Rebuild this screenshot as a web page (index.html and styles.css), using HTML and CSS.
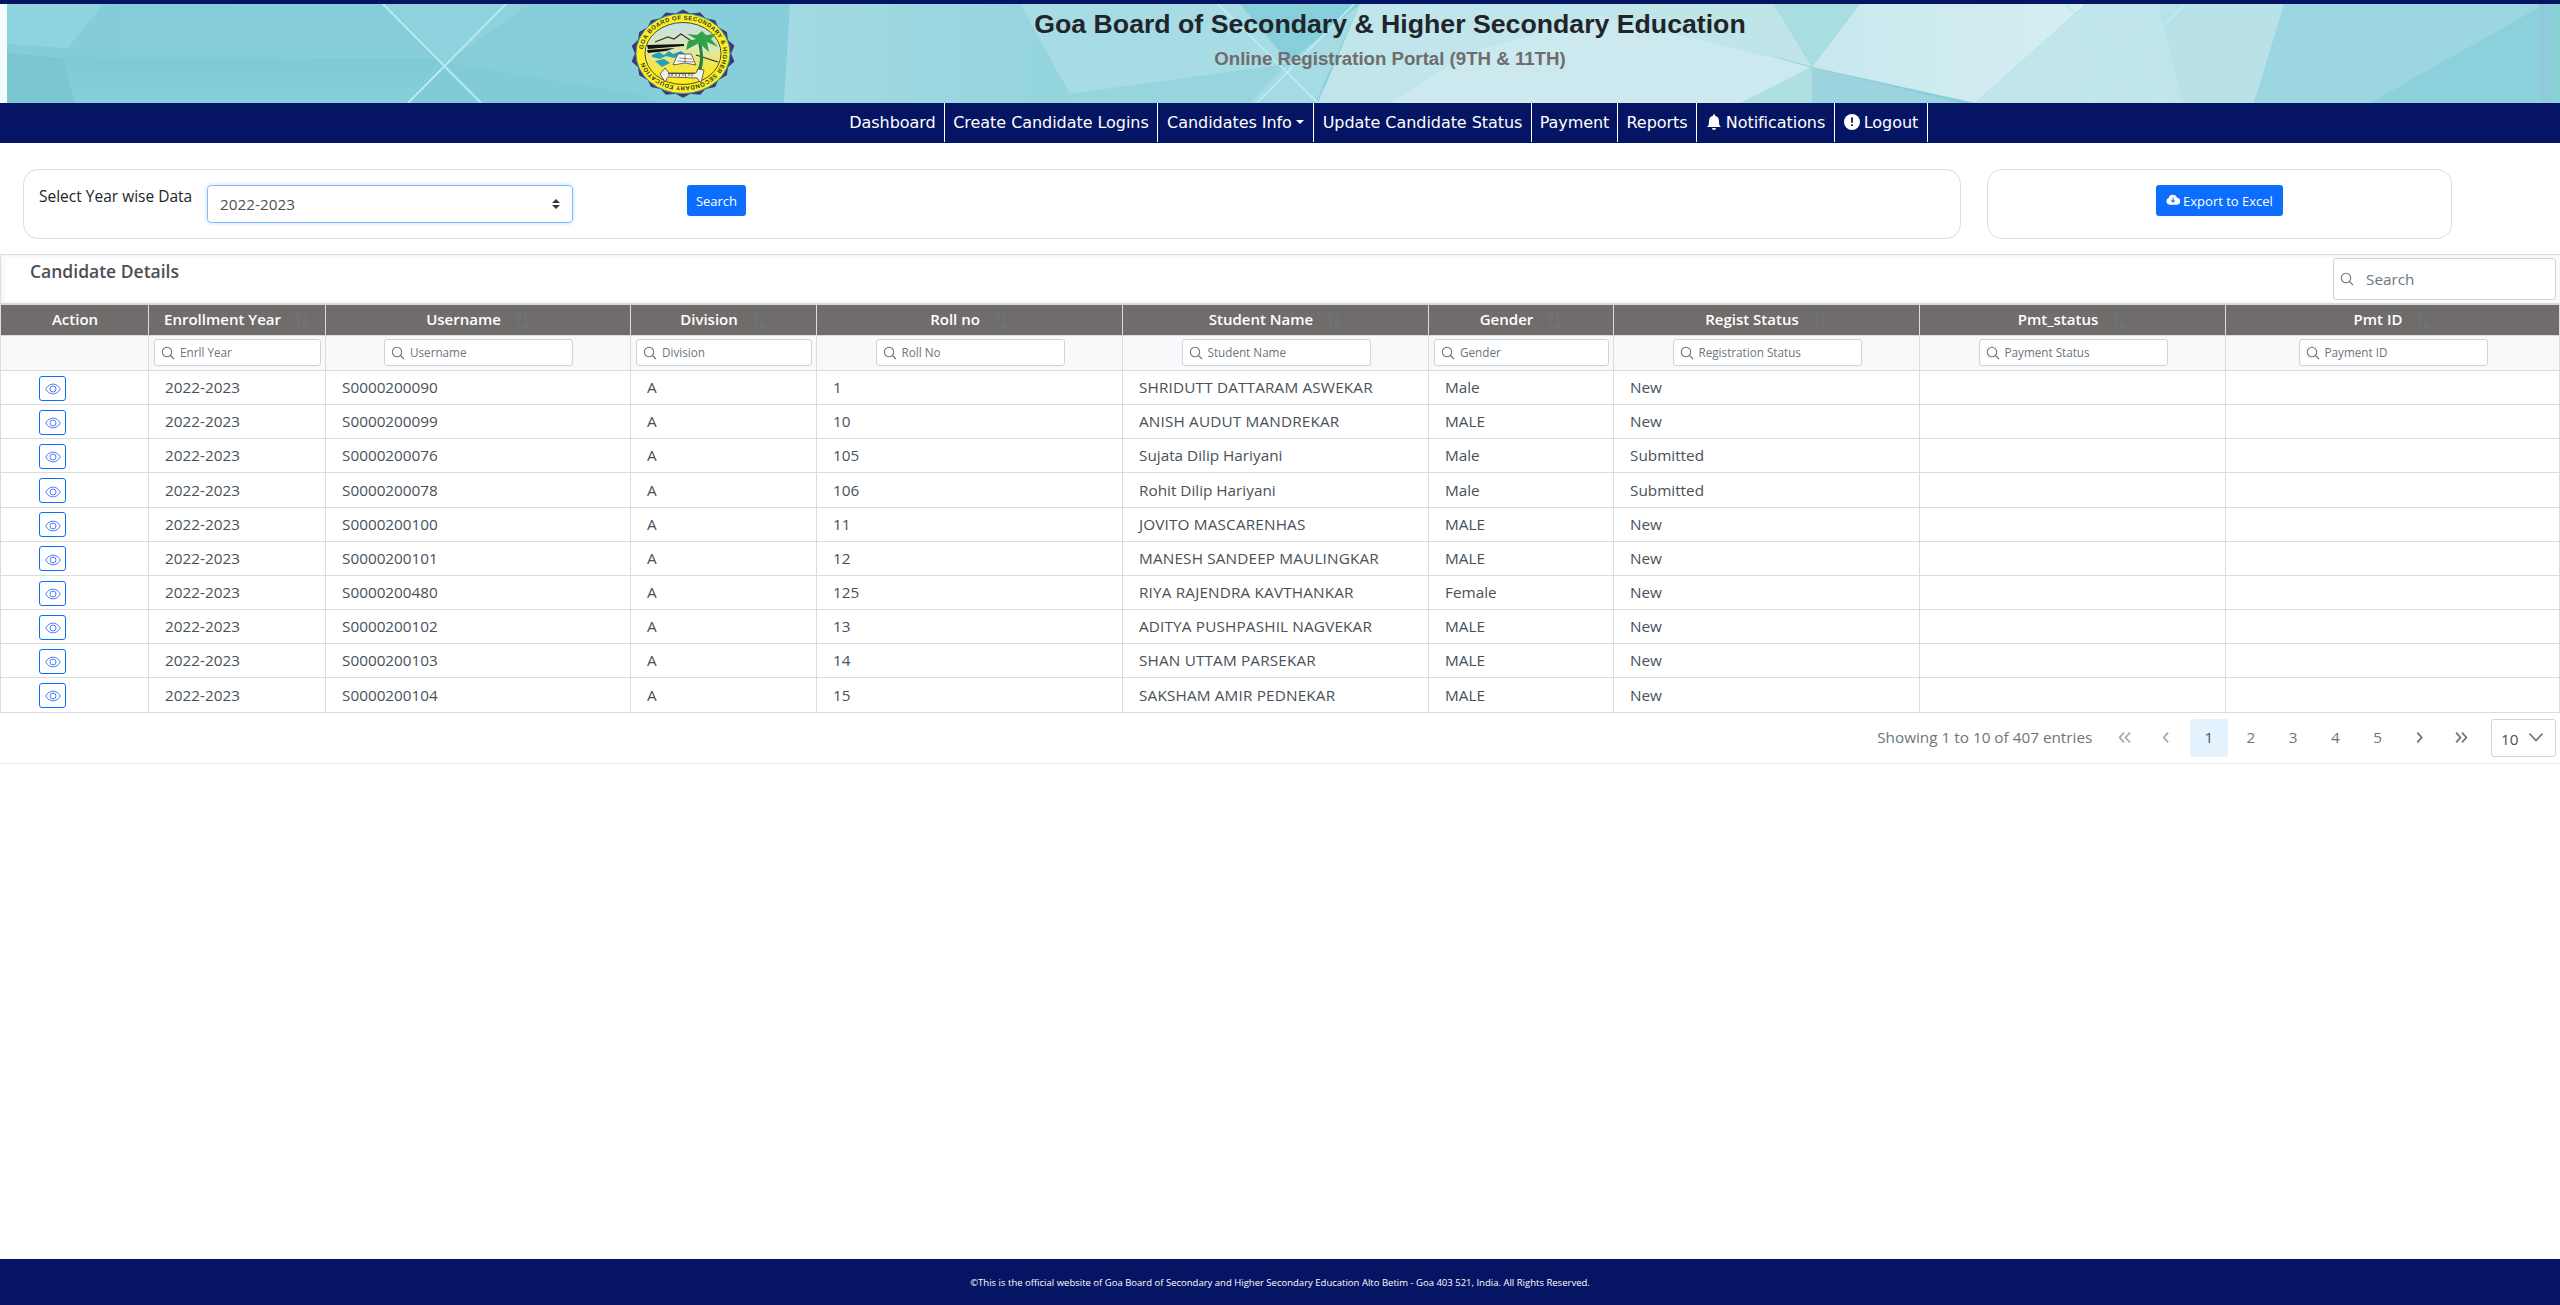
FILE: index.html
```html
<!DOCTYPE html>
<html lang="en">
<head>
<meta charset="utf-8">
<title>Goa Board - Candidate Details</title>
<link rel="stylesheet" href="styles.css">
</head>
<body>
<svg class="defs" aria-hidden="true">
  <symbol id="eye" viewBox="0 0 16 12"><path d="M.7 6C2.600 2.700 5.200 1.100 8 1.100S13.400 2.700 15.300 6C13.400 9.300 10.800 10.900 8 10.900S2.600 9.300.7 6z"/><circle cx="8" cy="6" r="3"/></symbol>
  <symbol id="lens" viewBox="0 0 14 14"><circle cx="6" cy="6" r="4.700"/><path d="M9.500 9.500 13 13"/></symbol>
  <symbol id="sort" viewBox="0 0 16 18"><path d="M4.500 17V1.500M1.500 4.500l3-3 3 3M11.500 1v15.500M8.500 13.500l3 3 3-3"/></symbol>
</svg>
<header class="banner">
  <svg class="art" viewBox="0 4 2560 99" preserveAspectRatio="none">
    <defs>
      <linearGradient id="sky" x1="0" x2="1" y1="0" y2="0"><stop offset="0" stop-color="#84cdd8"/><stop offset=".3" stop-color="#86cfda"/><stop offset="1" stop-color="#88cfd9"/></linearGradient>
      <linearGradient id="mid" x1="0" x2="1" y1="0" y2="0"><stop offset="0" stop-color="#a3dae3"/><stop offset="1" stop-color="#93d4dd"/></linearGradient>
      <linearGradient id="pale" x1="0" x2="1" y1="0" y2="0"><stop offset="0" stop-color="#c8e8ed"/><stop offset="1" stop-color="#d5eef2"/></linearGradient>
      <linearGradient id="low" x1="0" x2="0" y1="0" y2="1"><stop offset="0" stop-color="#7fcad7"/><stop offset="1" stop-color="#86cfda"/></linearGradient>
    </defs>
    <rect x="0" y="4" width="2560" height="99" fill="url(#sky)"/>
    <path d="M7 4h96L68 48 7 44z" fill="#8fd3df"/>
    <path d="M7 53l56 5 12 45H7z" fill="#7ac7d3"/>
    <path d="M63 58L440 58 410 103H75z" fill="url(#low)"/>
    <path d="M440 62l200 32 20 9H410z" fill="#80cbd7"/>
    <path d="M380 4h150L444 64z" fill="#8fd2dd"/>
    <path d="M790 4h262l20 99H784z" fill="url(#mid)"/>
    <path d="M1020 4h220l50 60-220 30z" fill="#a8dce5"/>
    <path d="M1070 94l217-30 60 39H1068z" fill="#97d5de"/>
    <path d="M1287 64l73-60-45 99h-65z" fill="#a6dbe3"/>
    <path d="M1360 4h240l212 64-70 35h-424z" fill="#c0e5eb"/>
    <path d="M1390 103l80-50 130-37 210 51-70 36z" fill="#cbe9ee"/>
    <path d="M1590 4h184l38 63z" fill="#bfe5e9"/>
    <path d="M1774 4h86l-48 63z" fill="#a8dde1"/>
    <path d="M1860 4h226L1975 103l-163-36z" fill="url(#pale)"/>
    <path d="M1812 67l-70 36h70z" fill="#aedfe1"/>
    <path d="M1812 67l148 36h-148z" fill="#9bd4df"/>
    <path d="M2086 4h200l-32 99H1975z" fill="#c0e5eb"/>
    <path d="M2158 4h126l-30 99h-72z" fill="#b8e1e8"/>
    <path d="M2284 4h276L2370 103H2254z" fill="#9bd6e1"/>
    <path d="M2545 4h15v99h-190z" fill="#8bd0db"/>
    <path d="M2539 4h11v99h-9z" fill="#90c9dc"/><path d="M2550 4h10v99h-10z" fill="#88d1d7"/>
    <path d="M383 4l98 99M506 4l-98 99M1218 4l100 99M1354 4l-97 99M2066 4l97 99M2185 4l-98 99" fill="none" stroke="#b9ebf3" stroke-width="1.800"/>
    <rect x="0" y="4" width="7" height="99" fill="#f4fbfc"/>
  </svg>
  <svg class="seal" viewBox="0 0 104 90">
    <defs>
      <linearGradient id="field" x1="0" x2="0" y1="0" y2="1"><stop offset="0" stop-color="#c5e0e8"/><stop offset=".42" stop-color="#dce7b4"/><stop offset=".72" stop-color="#f5e642"/><stop offset="1" stop-color="#ffec16"/></linearGradient>
      <path id="ring" d="M12 42.500A40 32.800 0 0 1 92 44.500A40 32.800 0 0 1 12 44.500"/>
    </defs>
    <path transform="translate(-3.600 .5) scale(1.070 .98)" d="M52 0l7 4 9-1 5 6 9 2 3 7 8 5 1 8 6 6-3 8 3 8-6 6-1 8-8 5-3 7-9 2-5 6-9-1-7 4-7-4-9 1-5-6-9-2-3-7-8-5-1-8-6-6 3-8-3-8 6-6 1-8 8-5 3-7 9-2 5-6 9 1z" fill="#46366f"/>
    <ellipse cx="52" cy="44.500" rx="47" ry="40" fill="#ffee23" stroke="#2e9caa"/>
    <ellipse cx="52" cy="44.500" rx="38" ry="31" fill="url(#field)" stroke="#39402c" stroke-width=".9"/>
    <path d="M24 33l13-5 6 2 7-5 9 6 6 3" fill="none" stroke="#333" stroke-width="1.300"/>
    <path d="M16 36l37-1v2l-36 3zM16 41l28-2-9 3-18 2z" fill="#111"/>
    <path d="M21 46l7-3 5 3 5-4 4 3 8-3 4 3-11 4-8-2-6 3-8-2zM24 52l9-2 6 4-8 4z" fill="#259ec0"/>
    <path d="M42 56l5-11h13l5 11-11-2z" fill="#fff" stroke="#444" stroke-width=".8"/><path d="M54 46v8M48 49l13 1M46 52l17 1" stroke="#555" stroke-width=".7"/>
    <path d="M65 46l22 7" stroke="#333" stroke-width="1.300"/>
    <path d="M65 63c5-8 5-16 2-30l3-1c2 12 4 22-1 32z" fill="#228545"/>
    <path d="M68 34l-13 7 2-9 8-2-9-5 10 1 5-4 4 4 10-1-5 5 7 8-11-5 2 10z" fill="#31a34b"/>
    <path d="M34 59l-5 6 5 8 3-5 29 1 4 5 3-13-6-1-2 4H38z" fill="#f4f2e8" stroke="#444" stroke-width=".8"/>
    <path d="M37 64.500h27M38 67v-2.500M41 67v-2l2-1M45 67v-3M48 67.500l1-3M52 67v-2.500M55 68l-1-3M58 67v-3M61 67.500v-3" fill="none" stroke="#333" stroke-width=".8"/>
    <text class="seal-text"><textPath href="#ring" startOffset="2" textLength="218" lengthAdjust="spacing">GOA BOARD OF SECONDARY &amp; HIGHER SECONDARY EDUCATION</textPath></text>
  </svg>
  <div class="titles"><h1>Goa Board of Secondary &amp; Higher Secondary Education</h1><h2>Online Registration Portal (9TH &amp; 11TH)</h2></div>
</header>
<nav class="nav">
  <a class="n1">Dashboard</a><a class="n2">Create Candidate Logins</a><a class="n3">Candidates Info<i class="caret"></i></a><a class="n4">Update Candidate Status</a><a class="n5">Payment</a><a class="n6">Reports</a>
  <a class="n7"><svg viewBox="0 0 16 16"><path d="M8 16a2 2 0 0 0 2-2H6a2 2 0 0 0 2 2zM8 0l1 1v.8C11.500 2.300 13 4.200 13 7c0 4 .7 5 2 6H1c1.300-1 2-2 2-6 0-2.800 1.500-4.700 4-5.200V1z" fill="#fff"/></svg>Notifications</a>
  <a class="n8"><svg viewBox="0 0 16 16"><circle cx="8" cy="8" r="8" fill="#fff"/><path d="M7 3.500h2L8.700 9H7.300zM7.100 10.300h1.800v1.800H7.100z" fill="#061563"/></svg>Logout</a>
</nav>
<section class="controls">
  <div class="panel year"><label>Select Year wise Data</label><div class="select">2022-2023<svg viewBox="0 0 8 10"><path d="M4 0l4 4H0zM4 10L0 6h8z" fill="#343a40"/></svg></div><button class="btn">Search</button></div>
  <div class="panel export"><button class="btn"><svg viewBox="0 0 16 12"><path d="M4 12a4 4 0 0 1-1-7.700A5 5 0 0 1 12.500 4 4 4 0 0 1 12 12z" fill="#fff"/><path d="M8 4v5M6 7l2 2 2-2" fill="none" stroke="#0d6efd" stroke-width="1.200"/></svg>Export to Excel</button></div>
</section>
<main class="table">
  <div class="caption"><div class="caption-in"><h3>Candidate Details</h3><div class="global"><svg><use href="#lens"/></svg>Search</div></div></div>
  <div class="row head"><div>Action</div><div>Enrollment Year<svg><use href="#sort"/></svg></div><div>Username<svg><use href="#sort"/></svg></div><div>Division<svg><use href="#sort"/></svg></div><div>Roll no<svg><use href="#sort"/></svg></div><div>Student Name<svg><use href="#sort"/></svg></div><div>Gender<svg><use href="#sort"/></svg></div><div>Regist Status<svg><use href="#sort"/></svg></div><div>Pmt_status<svg><use href="#sort"/></svg></div><div>Pmt ID<svg><use href="#sort"/></svg></div></div>
  <div class="row filter"><div></div><div><span><svg><use href="#lens"/></svg>Enrll Year</span></div><div><span><svg><use href="#lens"/></svg>Username</span></div><div><span><svg><use href="#lens"/></svg>Division</span></div><div><span><svg><use href="#lens"/></svg>Roll No</span></div><div><span><svg><use href="#lens"/></svg>Student Name</span></div><div><span><svg><use href="#lens"/></svg>Gender</span></div><div><span><svg><use href="#lens"/></svg>Registration Status</span></div><div><span><svg><use href="#lens"/></svg>Payment Status</span></div><div><span><svg><use href="#lens"/></svg>Payment ID</span></div></div>
  <div class="row data"><div><b><svg><use href="#eye"/></svg></b></div><div>2022-2023</div><div>S0000200090</div><div>A</div><div>1</div><div class="caps">SHRIDUTT DATTARAM ASWEKAR</div><div>Male</div><div>New</div><div></div><div></div></div>
  <div class="row data"><div><b><svg><use href="#eye"/></svg></b></div><div>2022-2023</div><div>S0000200099</div><div>A</div><div>10</div><div class="caps">ANISH AUDUT MANDREKAR</div><div>MALE</div><div>New</div><div></div><div></div></div>
  <div class="row data"><div><b><svg><use href="#eye"/></svg></b></div><div>2022-2023</div><div>S0000200076</div><div>A</div><div>105</div><div>Sujata Dilip Hariyani</div><div>Male</div><div>Submitted</div><div></div><div></div></div>
  <div class="row data"><div><b><svg><use href="#eye"/></svg></b></div><div>2022-2023</div><div>S0000200078</div><div>A</div><div>106</div><div>Rohit Dilip Hariyani</div><div>Male</div><div>Submitted</div><div></div><div></div></div>
  <div class="row data"><div><b><svg><use href="#eye"/></svg></b></div><div>2022-2023</div><div>S0000200100</div><div>A</div><div>11</div><div class="caps">JOVITO MASCARENHAS</div><div>MALE</div><div>New</div><div></div><div></div></div>
  <div class="row data"><div><b><svg><use href="#eye"/></svg></b></div><div>2022-2023</div><div>S0000200101</div><div>A</div><div>12</div><div class="caps">MANESH SANDEEP MAULINGKAR</div><div>MALE</div><div>New</div><div></div><div></div></div>
  <div class="row data"><div><b><svg><use href="#eye"/></svg></b></div><div>2022-2023</div><div>S0000200480</div><div>A</div><div>125</div><div class="caps">RIYA RAJENDRA KAVTHANKAR</div><div>Female</div><div>New</div><div></div><div></div></div>
  <div class="row data"><div><b><svg><use href="#eye"/></svg></b></div><div>2022-2023</div><div>S0000200102</div><div>A</div><div>13</div><div class="caps">ADITYA PUSHPASHIL NAGVEKAR</div><div>MALE</div><div>New</div><div></div><div></div></div>
  <div class="row data"><div><b><svg><use href="#eye"/></svg></b></div><div>2022-2023</div><div>S0000200103</div><div>A</div><div>14</div><div class="caps">SHAN UTTAM PARSEKAR</div><div>MALE</div><div>New</div><div></div><div></div></div>
  <div class="row data"><div><b><svg><use href="#eye"/></svg></b></div><div>2022-2023</div><div>S0000200104</div><div>A</div><div>15</div><div class="caps">SAKSHAM AMIR PEDNEKAR</div><div>MALE</div><div>New</div><div></div><div></div></div>
  <div class="pager">
    <span class="info">Showing 1 to 10 of 407 entries</span>
    <span class="pg off"><svg viewBox="0 0 14 14"><path d="M6.500 2.500L2.500 7l4 4.500M12 2.500L8 7l4 4.500"/></svg></span>
    <span class="pg off"><svg viewBox="0 0 14 14"><path d="M8.500 2.500L4.500 7l4 4.500"/></svg></span>
    <span class="pg on">1</span><span class="pg">2</span><span class="pg">3</span><span class="pg">4</span><span class="pg">5</span>
    <span class="pg"><svg viewBox="0 0 14 14"><path d="M5 2.500l4 4.500-4 4.500"/></svg></span>
    <span class="pg"><svg viewBox="0 0 14 14"><path d="M2 2.500l4 4.500-4 4.500M7.500 2.500l4 4.500-4 4.500"/></svg></span>
    <span class="size">10<svg viewBox="0 0 16 10"><path d="M1.500 1.500L8 8.500l6.500-7"/></svg></span>
  </div>
</main>
<footer>©This is the official website of Goa Board of Secondary and Higher Secondary Education Alto Betim - Goa 403 521, India. All Rights Reserved.</footer>
</body>
</html>
```
FILE: styles.css
```css
* { box-sizing: border-box; }
body {
  margin: 0;
  height: 1305px;
  overflow: hidden;
  display: flex;
  flex-direction: column;
  background: #fff;
  color: #212529;
  font: 15.300px/1.500 "Open Sans", "Noto Sans", sans-serif;
}
body > * { flex-shrink: 0; }
.defs { position: absolute; width: 0; height: 0; }
svg { flex: none; }

/* banner */
.banner {
  position: relative;
  height: 103px;
  border-top: 4px solid #061563;
  display: flex;
  padding-left: 631px;
}
.art { position: absolute; left: 0; top: 0; width: 100%; height: 99px; }
.seal { position: relative; width: 104px; height: 90px; margin-top: 5px; }
.seal-text { font: bold 6px "Liberation Sans", sans-serif; fill: #2b3a2a; }
.titles { position: relative; width: 1310px; text-align: center; font-family: "Liberation Sans", Arial, sans-serif; }
h1 { margin: 3px 0 0; font-size: 26.680px; line-height: 34px; font-weight: bold; color: #212529; }
h2 { margin: 6px 0 0; font-size: 18.670px; line-height: 24px; font-weight: bold; color: #706c6c; }

/* navigation */
.nav {
  height: 40px;
  background: #061563;
  color: #fff;
  display: flex;
  padding-left: 841px;
  font: 16px "DejaVu Sans", Verdana, sans-serif;
  letter-spacing: -0.050px;
}
.nav a {
  height: 39px;
  display: flex;
  align-items: center;
  justify-content: center;
  border-right: 1px solid #fff;
  padding-bottom: 1px;
  white-space: nowrap;
}
.nav svg { width: 16px; height: 16px; margin-right: 4px; }
.caret { border: 4px solid transparent; border-top-color: #fff; border-bottom: 0; margin-left: 4px; }
.n1 { width: 104px; } .n2 { width: 213px; } .n3 { width: 156px; } .n4 { width: 218px; }
.n5 { width: 86px; } .n6 { width: 79px; } .n7 { width: 138px; } .n8 { width: 93px; }

/* filter panels */
.controls { display: flex; gap: 26px; padding: 26px 0 0 23px; }
.panel { height: 70px; border: 1px solid #dedede; border-radius: 15px; display: flex; padding-top: 15px; }
.year { width: 1938px; padding-left: 15px; }
.year label { width: 168px; color: #212529; font-weight: 500; font-size: 15.500px; white-space: nowrap; }
.select {
  width: 366px;
  height: 38px;
  border: 1px solid #80bdff;
  border-radius: 4px;
  box-shadow: 0 0 4px #bfdcff;
  padding: 0 12px;
  display: flex;
  align-items: center;
  justify-content: space-between;
  color: #495057;
}
.select svg { width: 8px; height: 10px; }
.btn {
  height: 31px;
  border: 0;
  border-radius: 3px;
  padding: 0;
  background: #0d6efd;
  color: #fff;
  display: flex;
  align-items: center;
  justify-content: center;
  font: 13px "Open Sans", sans-serif;
}
.year .btn { width: 59px; margin-left: 114px; }
.export { width: 465px; justify-content: center; }
.export .btn { width: 127px; }
.btn svg { width: 14px; height: 11px; margin: 0 3px 3px 0; }

/* table */
.table { margin-top: 15px; border: 1px solid #dedede; border-width: 1px 0 0; height: 510px; }
.caption { height: 50px; padding: 3px 4px; background: #f8f9fa; border-left: 1px solid #dedede; border-bottom: 2px solid #d8dad9; }
.caption-in { height: 43px; display: flex; justify-content: space-between; background: #fff; padding-left: 25px; }
h3 { margin: 1px 0 0; font-size: 17.500px; line-height: 24px; font-weight: 600; color: #495057; }
.global {
  width: 223px;
  height: 42px;
  border: 1px solid #ced4da;
  border-radius: 3px;
  color: #6c757d;
  display: flex;
  align-items: center;
  padding-left: 6px;
}
.global svg { width: 14px; height: 14px; margin-right: 12px; }
.row {
  display: grid;
  grid-template-columns: 149px 177px 305px 186px 306px 306px 185px 306px 306px 334px;
  border-bottom: 1px solid #dcdcdc;
}
.row > div { border-right: 1px solid #dcdcdc; display: flex; align-items: center; white-space: nowrap; }
.row > div:first-child { border-left: 1px solid #dcdcdc; }
.head { height: 31px; background: #706c6c; color: #fff; font-weight: 600; font-size: 15px; }
.head > div { justify-content: center; padding-bottom: 1px; }
.head svg { width: 16px; height: 18px; margin: 3px 0 0 13px; stroke: #6c757d; fill: none; stroke-width: 1.300; }
.filter { height: 35px; background: #f8f9fa; }
.filter > div { padding: 0 4px 1px 5px; justify-content: center; }
.filter > div:first-child { padding: 0; }
.head > div:first-child { padding-left: 1px; }
.filter span {
  width: 100%;
  max-width: 189px;
  height: 27px;
  border: 1px solid #ced4da;
  border-radius: 3px;
  background: #fff;
  color: #6c757d;
  font-size: 11.700px;
  display: flex;
  align-items: center;
  padding: 1px 0 0 6px;
}
.filter svg { width: 14px; height: 14px; margin-right: 5px; }
.filter svg, .global svg { fill: none; stroke: #6c757d; stroke-width: 1.100; }
.data { height: 34.170px; color: #495057; }
.data > div { padding-left: 16px; }
.data > div:first-child { padding-left: 38px; }
.data .caps { letter-spacing: 0.160px; }
.data b { width: 27px; height: 25px; border: 1px solid #0d6efd; border-radius: 3px; display: flex; align-items: center; justify-content: center; padding-top: 2px; margin-top: 1px; }
.data b svg { width: 16px; height: 12px; fill: none; stroke: #4f7dff; stroke-width: 1; }
.pager { height: 51px; border-bottom: 1px solid #e9ecef; display: flex; align-items: center; justify-content: flex-end; gap: 4px; padding-right: 4px; color: #6c757d; }
.info { margin-right: 9px; white-space: nowrap; }
.pg { width: 38.200px; height: 38px; border-radius: 3px; display: flex; align-items: center; justify-content: center; }
.pg svg, .size svg { width: 15px; height: 15px; fill: none; stroke: #6c757d; stroke-width: 1.700; }
.off { opacity: .6; }
.on { background: #e3f2fd; color: #495057; }
.size { width: 65px; height: 38px; margin-left: 6px; border: 1px solid #ced4da; border-radius: 3px; display: flex; align-items: center; justify-content: space-between; padding: 3px 11px 0 9px; color: #495057; }
.size svg { width: 16px; height: 10px; margin-bottom: 5px; }

footer { height: 46px; margin-top: auto; background: #061563; color: #fff; text-align: center; font-size: 9.520px; line-height: 47px; }
```
